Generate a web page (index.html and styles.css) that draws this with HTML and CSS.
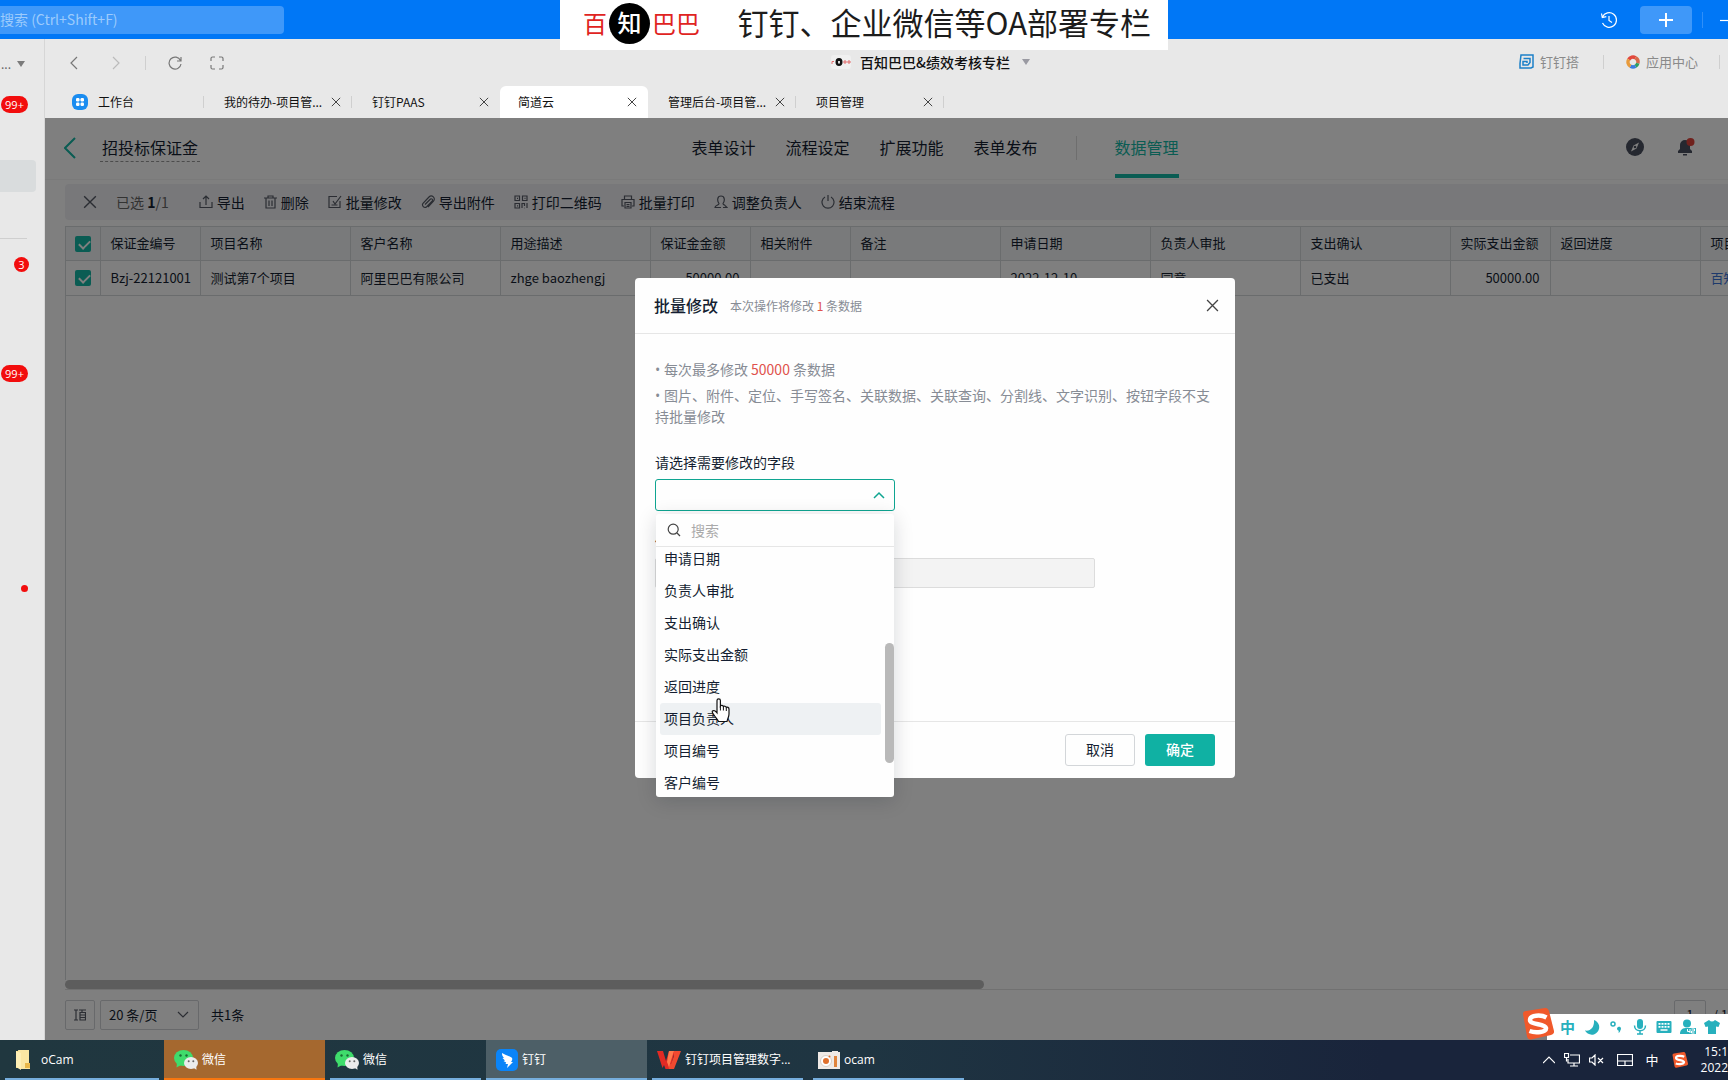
FILE: index.html
```html
<!DOCTYPE html>
<html lang="zh-CN">
<head>
<meta charset="utf-8">
<title>招投标保证金 - 批量修改</title>
<link rel="stylesheet" href="styles.css">
</head>
<body>
<svg class="defs" aria-hidden="true">
  <symbol id="i-close" viewBox="0 0 12 12"><path d="M1 1l10 10M11 1L1 11"/></symbol>
  <symbol id="i-wechat" viewBox="0 0 24 20">
    <ellipse cx="9.500" cy="8" rx="9.500" ry="8" fill="#3fdc6c"/><path d="M3 13l-.5 4.500 4.500-2.500z" fill="#3fdc6c"/>
    <circle cx="6.500" cy="5.500" r="1.200" fill="#1b6b34"/><circle cx="12.500" cy="5.500" r="1.200" fill="#1b6b34"/>
    <ellipse cx="17" cy="13" rx="7" ry="6" fill="#ececec"/><path d="M19 17.500l3.500 2.300-.3-3.800z" fill="#ececec"/>
    <circle cx="14.700" cy="11.300" r="1" fill="#666"/><circle cx="19.300" cy="11.300" r="1" fill="#666"/>
  </symbol>
  <symbol id="i-sogou" viewBox="0 0 32 32">
    <path d="M1 6Q1 3 4 3L23 0q3-.4 4 3l5 20q.6 3-3 4L9 31.500q-3 .5-4-3z" fill="#f0592b"/>
    <path d="M24.500 9.500C19 6.500 8 7 8 12s15 3.500 16 8c.7 4-10 5.500-16.500 3" fill="none" stroke="#fff" stroke-width="4.500"/>
  </symbol>
</svg>

<header class="topbar">
  <input class="global-search" type="search" placeholder="搜索 (Ctrl+Shift+F)" aria-label="搜索">
  <div class="top-actions">
    <button class="bare" aria-label="历史"><svg width="18" height="18" viewBox="0 0 18 18" class="line light"><path d="M2.500 6A7.300 7.300 0 1 1 2.500 12M1.500 2.500l.8 4 4-.8M9 5v4.500l3 2"/></svg></button>
    <button class="add" aria-label="新建"><svg width="16" height="16" viewBox="0 0 16 16" class="line light thick"><path d="M8 1v14M1 8h14"/></svg></button>
    <i class="vr blue"></i>
    <button class="bare minimize" aria-label="最小化"><svg width="14" height="14" viewBox="0 0 14 14" class="line light"><path d="M0 7.500h14"/></svg></button>
  </div>
</header>

<div class="workspace">
  <aside class="rail">
    <div class="rail-org"><span>...</span><svg width="8" height="6" viewBox="0 0 8 6"><path d="M0 0h8L4 6z" fill="#7b7b7b"/></svg></div>
    <span class="badge b1">99+</span>
    <div class="rail-active"></div>
    <hr>
    <span class="badge round b2">3</span>
    <span class="badge b3">99+</span>
    <i class="dot"></i>
  </aside>

  <main class="window">
    <div class="browser">
      <div class="browser-bar">
        <div class="history">
          <button class="bare" aria-label="后退"><svg width="14" height="14" viewBox="0 0 14 14" class="line"><path d="M10 1L4 7l6 6"/></svg></button>
          <button class="bare" aria-label="前进"><svg width="14" height="14" viewBox="0 0 14 14" class="line pale"><path d="M4 1l6 6-6 6"/></svg></button>
          <i class="vr"></i>
          <button class="bare" aria-label="刷新"><svg width="14" height="14" viewBox="0 0 14 14" class="line"><path d="M12.500 4.500A6 6 0 1 0 13 8M13 1v4H9"/></svg></button>
          <button class="bare" aria-label="全屏"><svg width="14" height="14" viewBox="0 0 14 14" class="line"><path d="M5 1H2.500Q1 1 1 2.500V5M9 1h2.500Q13 1 13 2.500V5M5 13H2.500Q1 13 1 11.500V9M9 13h2.500q1.500 0 1.500-1.500V9"/></svg></button>
        </div>
        <button class="org">
          <svg width="20" height="14" viewBox="0 0 20 14"><rect width="20" height="14" rx="3" fill="#f0f0f0"/><path d="M1 9V6.500h2M13 6h2v2h-2zM17 6h2v2h-2z" fill="none" stroke="#e06a6a"/><ellipse cx="8" cy="7" rx="3.500" ry="4" fill="#111"/><path d="M7 6h2v2.500H7z" fill="#ddd"/></svg>
          <span>百知巴巴&amp;绩效考核专栏</span>
          <svg width="8" height="6" viewBox="0 0 8 6"><path d="M0 0h8L4 6z" fill="#9a9aa2"/></svg>
        </button>
        <div class="quick">
          <a href="#"><svg width="15" height="15" viewBox="0 0 15 15" fill="none" stroke="#1c80c8" stroke-width="1.500"><path d="M2 1h12v12l-2 1H1V9.500zM4.500 4.500h6.500v4L9 11H4V7.500h4V9"/></svg>钉钉搭</a>
          <i class="vr"></i>
          <a href="#" class="center-link"><svg width="14" height="14" viewBox="0 0 14 14" fill="none" stroke-width="3.500"><path d="M2.700 4.500A5 5 0 0 1 9.500 2.700" stroke="#e2483d"/><path d="M9.500 2.700A5 5 0 0 1 11.800 8.300" stroke="#d66a4a"/><path d="M11.800 8.300A5 5 0 0 1 9.500 11.300" stroke="#2f9e62"/><path d="M9.500 11.300A5 5 0 0 1 4.500 11.300" stroke="#3a7de0"/><path d="M4.500 11.300A5 5 0 0 1 2.700 4.500" stroke="#e89b3c"/></svg>应用中心</a>
          <i class="vr last"></i>
        </div>
      </div>
      <nav class="tabs">
        <div class="tab home"><svg width="16" height="16" viewBox="0 0 16 16"><rect width="16" height="16" rx="6" fill="#1a8cf0"/><g fill="#fff"><rect x="4" y="4" width="3.500" height="3.500" rx="1.200"/><rect x="8.500" y="4" width="3.500" height="3.500" rx="1.200"/><rect x="4" y="8.500" width="3.500" height="3.500" rx="1.200"/><rect x="8.500" y="8.500" width="3.500" height="3.500" rx="1.200"/></g></svg><a href="#">工作台</a></div>
        <div class="tab"><a href="#">我的待办-项目管...</a><button class="bare" aria-label="关闭"><svg width="10" height="10" class="line dark"><use href="#i-close"/></svg></button></div>
        <div class="tab no-rule"><a href="#">钉钉PAAS</a><button class="bare" aria-label="关闭"><svg width="10" height="10" class="line dark"><use href="#i-close"/></svg></button></div>
        <div class="tab active"><a href="#">简道云</a><button class="bare" aria-label="关闭"><svg width="10" height="10" class="line dark"><use href="#i-close"/></svg></button></div>
        <div class="tab"><a href="#">管理后台-项目管...</a><button class="bare" aria-label="关闭"><svg width="10" height="10" class="line dark"><use href="#i-close"/></svg></button></div>
        <div class="tab"><a href="#">项目管理</a><button class="bare" aria-label="关闭"><svg width="10" height="10" class="line dark"><use href="#i-close"/></svg></button></div>
      </nav>
    </div>

    <div class="app">
      <div class="app-head">
        <div class="form-name">
          <a href="#" aria-label="返回"><svg width="12" height="22" viewBox="0 0 12 22" fill="none" stroke="#14b8a6" stroke-width="2"><path d="M11 1L1 11l10 10"/></svg></a>
          <h1>招投标保证金</h1>
        </div>
        <nav class="app-nav">
          <a href="#">表单设计</a><a href="#">流程设定</a><a href="#">扩展功能</a><a href="#">表单发布</a>
          <i class="vr"></i>
          <a href="#" class="current">数据管理</a>
        </nav>
        <div class="app-tools">
          <svg width="18" height="18" viewBox="0 0 18 18"><circle cx="9" cy="9" r="9" fill="#4a5060"/><path d="M13 4.500l-2.500 6L5 13.500l2.500-6z" fill="#fff"/><circle cx="9" cy="9" r="1.300" fill="#4a5060"/></svg>
          <svg width="18" height="20" viewBox="0 0 18 20"><path d="M1 16v-2l2-2V8a5 5 0 0 1 10 0v4l2 2v2zM6 17h4v1.500H6z" fill="#4a5060"/><circle cx="13.500" cy="5" r="4" fill="#e0423a"/></svg>
          <svg width="20" height="20" viewBox="0 0 20 20"><circle cx="10" cy="10" r="10" fill="#c8a83c"/></svg>
        </div>
      </div>

      <div class="batch-bar">
        <button class="bare quit" aria-label="取消选择"><svg width="14" height="14" class="line tool"><use href="#i-close"/></svg></button>
        <span class="picked">已选 <b>1</b>/1</span>
        <button><svg width="14" height="14" viewBox="0 0 14 14" class="line tool"><path d="M1 7v5.500h12V7M7 10V1M4 4l3-3 3 3"/></svg>导出</button>
        <button><svg width="13" height="14" viewBox="0 0 13 14" class="line tool"><path d="M0 3h13M4 3V1h5v2M2 3v10h9V3M5 5.500V11M8 5.500V11"/></svg>删除</button>
        <button><svg width="14" height="14" viewBox="0 0 14 14" class="line tool"><path d="M9 1.500H1v11h11V6M5 6l2 3 6-8M3.500 10h6"/></svg>批量修改</button>
        <button><svg width="14" height="14" viewBox="0 0 14 14" class="line tool"><path d="M4 9.500L9.500 4a1.300 1.300 0 0 1 1.800 1.800L5.500 12A2.600 2.600 0 0 1 2 8.300L8 2a3 3 0 0 1 4.500 4.200L7 12"/></svg>导出附件</button>
        <button><svg width="14" height="14" viewBox="0 0 14 14" class="line tool"><path d="M1 1h4.500v4.500H1zM8.500 1H13v4.500H8.500zM1 8.500h4.500V13H1zM8 13V8.500h2.500V11M13 8v5M10.500 13h.5M3 3.300h1M10.500 3.300h1M3 10.800h1"/></svg>打印二维码</button>
        <button><svg width="14" height="14" viewBox="0 0 14 14" class="line tool"><path d="M3.500 4V1h7v3M3 11H1V4.500h12V11h-2M4 7.500h6V13H4zM5.500 9.500h3M5.500 11.300h3"/></svg>批量打印</button>
        <button><svg width="14" height="14" viewBox="0 0 14 14" class="line tool"><path d="M7 12.500H1c0-2.500 4-2 4-4C3 6 3 1 7 1s4 5 2 7.500c0 1 1 1.300 2 1.800M9 12.500h4l-2-2"/></svg>调整负责人</button>
        <button><svg width="14" height="14" viewBox="0 0 14 14" class="line tool"><path d="M4 2a6 6 0 1 0 6 0M7 0v6"/></svg>结束流程</button>
      </div>

      <div class="grid">
        <table>
          <colgroup><col class="w34"><col class="w100"><col class="w150"><col class="w150"><col class="w150"><col class="w100"><col class="w100"><col class="w150"><col class="w150"><col class="w150"><col class="w150"><col class="w100"><col class="w150"><col class="w150"></colgroup>
          <thead><tr>
            <th class="pick"><input type="checkbox" checked aria-label="全选"></th>
            <th>保证金编号</th><th>项目名称</th><th>客户名称</th><th>用途描述</th><th>保证金金额</th><th>相关附件</th><th>备注</th><th>申请日期</th><th>负责人审批</th><th>支出确认</th><th>实际支出金额</th><th>返回进度</th><th>项目负责人</th>
          </tr></thead>
          <tbody><tr>
            <td class="pick"><input type="checkbox" checked aria-label="选择 Bzj-22121001"></td>
            <td>Bzj-22121001</td><td>测试第7个项目</td><td>阿里巴巴有限公司</td><td>zhge baozhengj</td><td class="num">50000.00</td><td></td><td></td><td>2022-12-10</td><td>同意</td><td>已支出</td><td class="num">50000.00</td><td></td><td><a href="#">百知巴巴</a></td>
          </tr></tbody>
        </table>
      </div>
      <div class="hscroll"><i></i></div>
      <div class="pager">
        <button class="box" aria-label="行高"><svg width="12" height="12" viewBox="0 0 12 12" class="line tool"><path d="M0 1h4M0 11h4M2 1v10M5 1h7M8 1v2.500M6 3.500h5.500V11H6zM6 6h5M6 8.500h5"/></svg></button>
        <div class="size"><select aria-label="每页条数"><option>20 条/页</option></select><svg width="12" height="8" viewBox="0 0 12 8" class="line tool"><path d="M1 1l5 5 5-5"/></svg></div>
        <span>共1条</span>
        <div class="pages"><input type="text" value="1" aria-label="页码"><span>/ 1</span></div>
      </div>

      <div class="mask">
        <section class="dialog" role="dialog" aria-label="批量修改">
          <header>
            <h2>批量修改</h2>
            <small>本次操作将修改 <em>1</em> 条数据</small>
            <button class="bare" aria-label="关闭"><svg width="13" height="13" class="line dark"><use href="#i-close"/></svg></button>
          </header>
          <div class="dialog-body">
            <p><span class="bullet">• </span>每次最多修改 <em>50000</em> 条数据</p>
            <p><span class="bullet">• </span>图片、附件、定位、手写签名、关联数据、关联查询、分割线、文字识别、按钮字段不支持批量修改</p>
            <label for="field">请选择需要修改的字段</label>
            <div class="field">
              <select id="field"><option></option></select>
              <svg width="12" height="8" viewBox="0 0 12 8" fill="none" stroke="#0fa591" stroke-width="1.500"><path d="M1 7l5-5 5 5"/></svg>
              <div class="menu">
                <div class="menu-search"><svg width="14" height="14" viewBox="0 0 14 14" class="line dark"><circle cx="6.200" cy="6.200" r="5"/><path d="M10 10l3 3"/></svg><input type="text" placeholder="搜索" aria-label="搜索字段"></div>
                <div class="menu-list">
                  <ul>
                    <li>申请日期</li><li>负责人审批</li><li>支出确认</li><li>实际支出金额</li><li>返回进度</li><li class="hover">项目负责人</li><li>项目编号</li><li>客户编号</li>
                  </ul>
                  <i class="thumb"></i>
                </div>
                <svg class="hand" width="20" height="26" viewBox="0 0 20 26"><path d="M6 15V3.500a1.700 1.700 0 0 1 3.400 0V9c.6-1 2.600-.8 3 .6.8-.8 2.400-.5 2.800.8 1-.6 2.800 0 2.800 1.600v5c0 3-1.500 4.500-2 7.500H7.500c-1-2.500-3-4-4.500-6.500-1-1.700-2.500-3-1.500-4 1.200-1.200 3 .1 4.500 1.800z" fill="#fff" stroke="#111" stroke-width="1.200"/><path d="M9.400 9v4.500M12.400 10v3.500M15.300 11v3" stroke="#111" fill="none"/></svg>
              </div>
            </div>
            <label for="value">修改为</label>
            <input id="value" class="value" type="text" disabled>
          </div>
          <footer><button class="cancel">取消</button><button class="ok">确定</button></footer>
        </section>
      </div>
    </div>
  </main>
</div>

<footer class="taskbar">
  <button class="task"><svg width="16" height="20" viewBox="0 0 16 20"><path d="M0 1h11v17H0z" fill="#f7d978"/><path d="M2 0h11v16l1 1v2H5z" fill="#fbe7a3"/><path d="M0 1l5 2v17l-5-3z" fill="#ffefb5"/><path d="M9 13h5v5H9z" fill="#e9b84a"/></svg><span>oCam</span></button>
  <button class="task alert"><svg width="24" height="20"><use href="#i-wechat"/></svg><span>微信</span></button>
  <button class="task"><svg width="24" height="20"><use href="#i-wechat"/></svg><span>微信</span></button>
  <button class="task current"><svg width="22" height="22" viewBox="0 0 22 22"><rect width="22" height="22" rx="5" fill="#0a84f8"/><path d="M6 4c3 2 6 2.500 9.500 4.500 1.300.8.800 2.500-.5 4.500h2L11 19l1-4H9.500l.7-1.500L7.500 12l1.500-.5L6.500 9 8 8.700C6.500 7.500 6 6 6 4z" fill="#fff"/></svg><span>钉钉</span></button>
  <button class="task"><svg width="24" height="18" viewBox="0 0 24 18"><path d="M0 0h6l3 10 3-10h6l-5 18H8.500L7 14l-1.500 3z" fill="#e22a24"/><path d="M17 0h7l-7 18h-5l-1-4 3-1 3-8z" fill="#f04a30"/><path d="M12 0h5l-5 16-2-5z" fill="#ff7a4d"/></svg><span>钉钉项目管理数字...</span></button>
  <button class="task"><svg width="22" height="18" viewBox="0 0 22 18"><path d="M0 1h14V0h6v1h2v17H0z" fill="#efeae6"/><circle cx="8" cy="10" r="5.500" fill="#fff" stroke="#d8cfc8"/><circle cx="8" cy="10" r="3" fill="#e0702c"/><circle cx="11.500" cy="5.500" r="1" fill="#e0702c"/><path d="M16 5h3v11h-3z" fill="#e0843c"/></svg><span>ocam</span></button>
  <div class="tray">
    <div class="devices">
      <svg width="12" height="8" viewBox="0 0 12 8" class="line light"><path d="M0 7l6-6 6 6"/></svg>
      <svg width="16" height="14" viewBox="0 0 16 14" class="line light"><path d="M6 2h9.500v8H4V6M10 10v3M6 13h8M.5.500h4v4h-4zM2.500 4.500v4"/></svg>
      <svg width="15" height="12" viewBox="0 0 15 12" class="line light"><path d="M.5 4h2.500l3-3v10L3 8H.5zM9 4l5 5M14 4L9 9"/></svg>
    </div>
    <svg width="16" height="12" viewBox="0 0 16 12" class="line light"><path d="M.5.500h15v11H.5zM.5 7h15M8 7v4.500"/></svg>
    <span class="ime">中</span>
    <svg width="16" height="16"><use href="#i-sogou"/></svg>
    <div class="clock"><span>15:1</span><span>2022</span></div>
  </div>
</footer>

<div class="banner">
  <div class="logo"><span>百</span><b>知</b><span>巴巴</span></div>
  <strong>钉钉、企业微信等OA部署专栏</strong>
</div>

<div class="sogou">
  <svg class="mark" width="32" height="32"><use href="#i-sogou"/></svg>
  <span>中</span>
  <svg width="16" height="16" viewBox="0 0 16 16"><path d="M10 1a7.500 7.500 0 1 1-9 10.500C7 12.500 10.500 8 10 1z"/></svg>
  <svg width="16" height="16" viewBox="0 0 16 16"><circle cx="5" cy="5" r="2" fill="none" stroke="#27b0bd" stroke-width="1.500"/><path d="M9 9.500a2 2 0 1 1 3.500 1.500c-.3 1.500-1 2.500-2 3 .3-1 .3-1.700 0-2.500C9.500 11.300 9 10.500 9 9.500z"/></svg>
  <svg width="16" height="16" viewBox="0 0 16 16"><rect x="5" width="6" height="10" rx="3"/><path d="M2.500 6.500c0 7 11 7 11 0M8 11.500V15M5 15h6" fill="none" stroke="#27b0bd" stroke-width="1.500"/></svg>
  <svg width="16" height="16" viewBox="0 0 16 16"><path fill-rule="evenodd" d="M1.500 2h13q1 0 1 1v10q0 1-1 1h-13q-1 0-1-1V3q0-1 1-1zM2.500 4v1.800h2V4zm3 0v1.800h2V4zm3 0v1.800h2V4zm3 0v1.800h2V4zm-9 3v1.800h2V7zm3 0v1.800h2V7zm3 0v1.800h2V7zm3 0v1.800h2V7zm-7 3.200v1.600h7v-1.600z"/></svg>
  <svg width="16" height="16" viewBox="0 0 16 16"><circle cx="7" cy="4.500" r="4"/><path d="M0 15c0-5 3-6 7-6h9v6z"/><path d="M7.500 10v2.500H10M10 10v4M11.500 10h3v2h-3v2h3" fill="none" stroke="#fff"/></svg>
  <svg width="16" height="16" viewBox="0 0 16 16"><path d="M5 1q3 3 6 0l5 3-1.500 4L12 7.500V15H4V7.500L1.500 8 0 4z"/></svg>
</div>
</body>
</html>
```
FILE: styles.css
```css
* { box-sizing: border-box; }
body {
  margin: 0;
  min-height: 100vh;
  display: flex;
  flex-direction: column;
  position: relative;
  overflow: hidden;
  font: 14px/20px "Noto Sans CJK SC", "Noto Sans", sans-serif;
  color: #141e31;
  background: #e8e8e8;
}
button, input, select { font: inherit; color: inherit; margin: 0; padding: 0; border: 0; background: none; border-radius: 0; outline: 0; }
a { color: inherit; text-decoration: none; }
h1, h2, p, ul { margin: 0; padding: 0; font-weight: 400; list-style: none; }
em { font-style: normal; color: #e0524c; }
svg { flex: none; display: block; }
.defs { position: absolute; width: 0; height: 0; }
.line { fill: none; stroke: #777; stroke-width: 1.200; }
.line.pale { stroke: #bbb; }
.line.dark { stroke: #444; }
.line.tool { stroke: #565b66; }
.line.light { stroke: #fff; }
.line.thick { stroke-width: 2; }
.bare { display: flex; align-items: center; justify-content: center; }
.vr { width: 1px; height: 14px; background: #cfcfcf; flex: none; }
.vr.blue { background: #2f8ff8; height: 16px; }

.topbar { height: 39px; flex: none; background: #0077f6; display: flex; align-items: center; justify-content: space-between; }
.global-search { width: 284px; height: 28px; background: #3f98f9; border-radius: 0 4px 4px 0; color: #fff; appearance: none; padding-bottom: 2px; }
.global-search::placeholder { color: #9ccbfc; }
.top-actions { display: flex; align-items: center; }
.add { width: 52px; height: 28px; margin: 0 10px 0 22px; background: #3f98f9; border-radius: 4px; display: flex; align-items: center; justify-content: center; }
.minimize { margin-left: 17px; width: 8px; overflow: hidden; justify-content: flex-start; }

.workspace { flex: 1; display: flex; min-width: 0; }
.rail { width: 45px; flex: none; border-right: 1px solid #d6d6d6; display: flex; flex-direction: column; align-items: flex-start; }
.rail-org { display: flex; align-items: center; gap: 6px; height: 50px; padding-left: 1px; color: #666; font-size: 12px; }
.badge { height: 17px; width: 27px; border-radius: 9px; background: #f20d0d; color: #fff; font: 11px/17px "Open Sans", sans-serif; text-align: center; }
.badge.round { width: 15px; height: 15px; line-height: 15px; }
.b1 { margin: 7px 0 0 1px; }
.b2 { margin: 18px 0 0 14px; }
.b3 { margin: 93px 0 0 1px; }
.rail-active { width: 36px; height: 32px; margin-top: 47px; background: #d9dcdd; border-radius: 0 4px 4px 0; }
.rail hr { width: 27px; height: 1px; border: 0; margin: 46px 0 0; background: #cfcfcf; }
.dot { width: 7px; height: 7px; border-radius: 50%; background: #f20d0d; margin: 203px 0 0 21px; }

.window { flex: 1; min-width: 0; display: flex; flex-direction: column; overflow: hidden; }
.browser-bar { height: 47px; display: flex; align-items: center; justify-content: space-between; }
.browser { flex: none; }
.history { display: flex; align-items: center; padding-left: 22px; width: 748px; }
.history .bare { margin-right: 28px; }
.history .vr { margin: 0 22px 0 -6px; }
.org { display: flex; align-items: center; gap: 9px; font-weight: 500; color: #111; padding-bottom: 1px; white-space: nowrap; }
.org svg:last-child { margin-left: 3px; }
.quick { display: flex; align-items: center; justify-content: flex-end; width: 660px; font-size: 13px; color: #8a8a8a; padding: 0 8px 2px 0; }
.quick a { display: flex; align-items: center; gap: 6px; }
.quick .vr { margin: 0 22px 0 24px; }
.quick .vr.last { margin: 0 0 0 21px; }
.tabs { display: flex; height: 32px; padding-left: 11px; font-size: 12px; color: #111; }
.tab { width: 148px; display: flex; align-items: center; justify-content: space-between; padding: 0 11px 0 20px; position: relative; white-space: nowrap; }
.tab::after { content: ""; width: 1px; height: 12px; background: #cfcfcf; position: absolute; right: 0; top: 10px; }
.tab.no-rule::after, .tab.active::after { display: none; }
.tab.active { background: #fff; border-radius: 6px 6px 0 0; padding-left: 18px; }
.tab.home { justify-content: flex-start; gap: 10px; padding-left: 16px; }

/* The hosted application runs past the right edge of the window. */
.app { flex: 1; width: calc(100% + 97px); background: #fff; position: relative; display: flex; flex-direction: column; }
.app-head { height: 62px; display: grid; grid-template-columns: 1fr auto 1fr; border-bottom: 1px solid #f4f4f4; font-size: 16px; }
.form-name { display: flex; align-items: center; padding: 0 0 2px 19px; gap: 24px; }
.form-name h1 { font-size: 16px; line-height: 24px; padding: 2px 2px; border-bottom: 1px dashed #999; }
.app-nav { display: flex; gap: 30px; }
.app-nav a { line-height: 58px; }
.app-nav .vr { margin: 18px 8px 0 8px; height: 24px; background: #dcdcdc; }
.app-nav .current { color: #14b8a6; height: 60px; border-bottom: 4px solid #14b8a6; }
.app-tools { display: flex; align-items: center; justify-content: flex-end; gap: 33px; padding: 0 77px 3px 0; }
.batch-bar { height: 36px; margin: 4px 0 6px 20px; background: #f1f1f5; border-radius: 4px; display: flex; align-items: center; gap: 19px; padding-left: 18px; white-space: nowrap; }
.batch-bar button { display: flex; align-items: center; gap: 4px; }
.picked { color: #666; margin-right: 11px; }
.picked b { color: #141e31; }

.grid { flex: 1; margin-left: 20px; border-left: 1px solid #d5d8da; font-size: 13px; }
table { border-collapse: collapse; table-layout: fixed; width: 1784px; border-top: 1px solid #d5d8da; }
.w34 { width: 34px; } .w100 { width: 100px; } .w150 { width: 150px; }
th, td { height: 34px; padding: 0 10px; font-weight: 400; text-align: left; white-space: nowrap; border-right: 1px solid #d5d8da; border-bottom: 1px solid #d5d8da; }
th { background: #f2f5f7; padding-bottom: 2px; }
td { height: 35px; }
.num { text-align: right; }
td a { color: #3c74d8; }
.pick { padding: 0 9px; }
.pick input { display: block; appearance: none; width: 16px; height: 16px; border-radius: 2px; background: #14b8a6; position: relative; }
.pick input::after { content: ""; position: absolute; left: 4px; top: 4px; width: 9px; height: 5px; border: solid #fff; border-width: 0 0 2px 2px; transform: rotate(-45deg); }
.hscroll { margin-left: 20px; height: 10px; border-bottom: 1px solid #e3e3e3; }
.hscroll i { display: block; width: 919px; height: 9px; border-radius: 5px; background: #bababa; }
.pager { height: 50px; margin-left: 20px; display: flex; align-items: center; padding-bottom: 1px; font-size: 13px; }
.box, .size { height: 30px; border: 1px solid #d0d3d6; border-radius: 2px; display: flex; align-items: center; justify-content: center; }
.box { width: 30px; }
.size { width: 99px; margin: 0 12px 0 5px; padding: 0 9px 0 8px; }
.size select { flex: 1; appearance: none; }
.pages { margin-left: auto; display: flex; align-items: center; gap: 7px; padding-right: 97px; }
.pages input { width: 32px; height: 30px; border: 1px solid #d0d3d6; border-radius: 2px; text-align: center; }

.mask { position: absolute; inset: 0; background: rgba(0, 0, 0, .5); display: flex; justify-content: center; align-items: flex-start; padding-top: 160px; }
.dialog { width: 600px; min-height: 500px; background: #fefefe; border-radius: 4px; display: flex; flex-direction: column; }
.dialog header { height: 56px; border-bottom: 1px solid #e6e6e6; display: flex; align-items: center; gap: 12px; padding: 0 16px 0 19px; }
.dialog h2 { font-size: 16px; font-weight: 500; padding-bottom: 2px; }
.dialog small { font-size: 12px; color: #878c95; flex: 1; }
.dialog-body { flex: 1; padding: 25px 20px 0; display: flex; flex-direction: column; align-items: flex-start; }
.dialog-body p { line-height: 21px; padding-bottom: 5px; color: #878c95; }
.bullet { font-family: "Open Sans", sans-serif; line-height: 1; }
.dialog-body label { margin-top: 19px; line-height: 22px; padding-bottom: 6px; }
.field { position: relative; width: 240px; height: 32px; border: 1px solid #0fa591; border-radius: 3px; display: flex; align-items: center; padding-right: 9px; }
.field select { flex: 1; height: 30px; appearance: none; }
.value { width: 440px; height: 30px; background: #f3f3f3; border: 1px solid #dcdcdc; border-radius: 2px; }
.menu { position: absolute; left: 0; top: 34px; width: 238px; height: 283px; background: #fefefe; border-radius: 3px; box-shadow: 0 4px 20px rgba(0, 20, 30, .16); display: flex; flex-direction: column; z-index: 1; }
.menu-search { height: 33px; flex: none; border-bottom: 1px solid #e6e6e6; display: flex; align-items: center; gap: 10px; padding-left: 11px; }
.menu-search input { width: 150px; }
.menu-search input::placeholder { color: #aaa; }
.menu-list { flex: 1; position: relative; overflow: hidden; padding: 0 13px 0 4px; }
.menu-list ul { margin-top: -4px; }
.menu-list li { height: 32px; line-height: 30px; padding-left: 4px; border-radius: 3px; }
.menu-list .hover { background: #eef1f3; }
.thumb { position: absolute; right: 0; top: 96px; width: 9px; height: 120px; border-radius: 5px; background: #b9b9b9; }
.hand { position: absolute; left: 55px; top: 183px; }
.dialog footer { height: 57px; border-top: 1px solid #e6e6e6; display: flex; justify-content: flex-end; gap: 10px; padding: 12px 20px; }
.dialog footer button { width: 70px; height: 32px; border-radius: 3px; padding-bottom: 2px; }
.cancel { border: 1px solid #d3d6d9; }
.ok { background: #10b1a3; color: #fff; font-weight: 500; }

.taskbar { height: 40px; flex: none; display: flex; background: linear-gradient(90deg, #20373f, #1f3542 50%, #19243b 80%); color: #fff; font: 12px/16px "Open Sans", "Noto Sans CJK SC", sans-serif; position: relative; }
.task { flex: 0 1 161px; display: flex; align-items: center; gap: 4px; padding: 0 10px; position: relative; color: #fff; white-space: nowrap; }
.task::after { content: ""; position: absolute; left: 5px; right: 5px; bottom: 0; height: 2px; background: #76aedd; }
.task:first-child { flex-basis: 164px; gap: 9px; padding-left: 16px; }
.task.alert { background: #a5682f; }
.task.alert::after { left: 0; right: 0; background: #f8760f; }
.task.current { background: #4d5f67; }
.task.current::after { left: 0; right: 0; }
.tray { margin-left: auto; display: flex; align-items: center; gap: 13px; }
.devices { display: flex; align-items: center; gap: 9px; }
.ime { font-size: 13px; }
.clock { display: flex; flex-direction: column; align-items: flex-end; }

.banner { position: absolute; top: 0; left: 50%; margin-left: -304px; width: 608px; height: 50px; background: #fff; display: flex; align-items: center; justify-content: space-between; padding: 0 17px 7px 23px; white-space: nowrap; }
.logo { display: flex; align-items: center; gap: 2px; color: #e0241f; font-size: 24px; line-height: 32px; padding-top: 3px; }
.logo b { width: 41px; height: 41px; border-radius: 50%; background: #000; color: #fff; text-align: center; line-height: 38px; font-weight: 500; }
.banner strong { font-size: 31px; line-height: 40px; font-weight: 400; color: #1c1c1c; }

.sogou { position: absolute; right: 0; bottom: 40px; height: 26px; width: 181px; background: #fff; display: flex; align-items: center; gap: 8px; padding-left: 13px; }
.sogou svg { fill: #27b0bd; }
.sogou span { width: 16px; color: #27b0bd; font-weight: 700; font-size: 15px; }
.sogou .mark { position: absolute; left: -25px; bottom: 0; }
```
